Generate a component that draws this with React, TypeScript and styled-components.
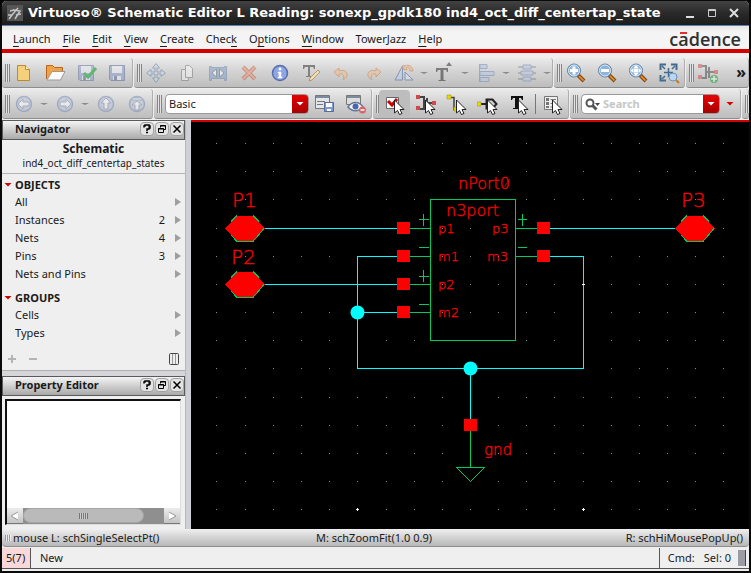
import React, { useState } from "react";
import styled, { createGlobalStyle, css } from "styled-components";

const Global = createGlobalStyle`
  * { box-sizing: border-box; }
  body { margin: 0; background: #000; }
  button, input, select { font: inherit; color: inherit; }
  svg { display: block; flex: none; }
`;

const Frame = styled.div`
  min-height: 100vh;
  display: flex;
  flex-direction: column;
  border: solid #0a0a0a;
  border-width: 1px 2px 2px;
  border-radius: 6px 6px 0 0;
  background: #efefef;
  color: #1a1a1a;
  font: 11px/18px "Noto Sans", sans-serif;
  overflow: hidden;
`;

const TitleBar = styled.header`
  display: flex;
  align-items: center;
  height: 25px;
  padding: 0 4px 0 5px;
  gap: 5px;
  background: linear-gradient(#424242, #2a2a2a 50%, #1c1c1c);
  border-bottom: 1px solid #5c82b0;
  color: #fff;
`;

const WindowTitle = styled.h1`
  flex: 1;
  min-width: 0;
  margin: 0;
  overflow: hidden;
  white-space: nowrap;
  font: bold 13px/20px "DejaVu Sans", sans-serif;
`;

const ControlRow = styled.div`
  display: flex;
`;

const WindowButton = styled.button`
  width: 22px;
  height: 22px;
  padding: 0;
  border: 0;
  background: none;
  display: grid;
  place-items: center;
`;

const MenuBar = styled.nav`
  display: flex;
  align-items: center;
  height: 27px;
  padding: 2px 8px 0 11px;
  gap: 12px;
  background: linear-gradient(#e6e6e6, #f4f4f4 6px);
  border-bottom: 4px solid #d20000;
`;

const MenuItem = styled.button`
  padding: 0;
  border: 0;
  background: none;
  line-height: 18px;
  u {
    text-underline-offset: 3px;
    text-decoration-thickness: 1px;
  }
`;

const Wordmark = styled.span`
  margin-left: auto;
  font: 600 18px/20px "Open Sans", sans-serif;
  color: #303030;
`;

const AccentedLetter = styled.span`
  position: relative;
  &::before {
    content: "";
    position: absolute;
    left: 2px;
    right: 2px;
    top: 5px;
    height: 2px;
    background: #e03030;
  }
`;

const ToolRow = styled.div<{ $first?: boolean }>`
  display: flex;
  gap: 1px;
  padding: ${(p) => (p.$first ? 5 : 0)}px 0 1px;
  background: #efefef;
`;

const ToolGroup = styled.div<{ $grow?: boolean }>`
  display: flex;
  align-items: center;
  height: 30px;
  flex: ${(p) => (p.$grow ? "1 1 0" : "none")};
  min-width: 0;
  background: linear-gradient(#ebebeb, #d6d6d6 40%, #bdbdbd);
  border-bottom: 1px solid #8d8d8d;
  border-right: 1px solid #adadad;
  border-radius: 3px;
`;

const Grip = styled.span`
  flex: none;
  width: 5px;
  height: 18px;
  margin: 0 -2px 0 3px;
  background: repeating-linear-gradient(90deg, #858585 0 1px, #e4e4e4 1px 2px);
`;

const ToolButton = styled.button<{ $active?: boolean }>`
  flex: none;
  width: 31px;
  height: 28px;
  padding: 0;
  border: 1px solid transparent;
  border-radius: 4px;
  background: ${(p) => (p.$active ? "#bdbdbd" : "none")};
  display: grid;
  place-items: center;
  &:disabled svg { opacity: 0.5; }
`;

const Caret = styled.button`
  flex: none;
  width: 10px;
  height: 20px;
  padding: 0;
  border: 0;
  background: none;
  display: grid;
  place-items: center;
  &::before {
    content: "";
    border: 4px solid transparent;
    border-bottom-width: 0;
    border-top: 2px solid #8a8a8a;
  }
`;

const Separator = styled.span`
  width: 1px;
  height: 20px;
  margin: 0 1px;
  background: #777;
`;

const More = styled.button`
  margin-left: auto;
  padding: 0 2px 2px;
  border: 0;
  background: none;
  font: bold 16px/20px "Noto Sans", sans-serif;
`;

const Field = styled.div<{ $grow?: boolean }>`
  display: flex;
  align-items: center;
  flex: ${(p) => (p.$grow ? "1 1 0" : "none")};
  width: ${(p) => (p.$grow ? "auto" : "144px")};
  min-width: 0;
  height: 20px;
  margin-left: 5px;
  border: 1px solid #999;
  border-radius: 4px;
  background: #fff linear-gradient(#e60000, #a80000) right / 16px 100% no-repeat;
  position: relative;
`;

const fieldText = css`
  width: 100%;
  min-width: 0;
  height: 18px;
  border: 0;
  padding: 0 18px 0 3px;
  background: none;
  outline: 0;
  appearance: none;
`;

const WorkspaceSelect = styled.select`
  ${fieldText}
`;

const SearchInput = styled.input`
  ${fieldText}
  font-weight: bold;
  &::placeholder { color: #c6c6c6; opacity: 1; }
`;

const Triangle = styled.span<{ $color: string }>`
  flex: none;
  width: 8px;
  height: 4px;
  background: ${(p) => p.$color};
  clip-path: polygon(0 0, 100% 0, 50% 100%);
`;

const FieldArrow = styled(Triangle)`
  position: absolute;
  right: 4px;
  pointer-events: none;
`;

const SearchMenu = styled.button`
  flex: none;
  width: 20px;
  height: 24px;
  padding: 0;
  border: 0;
  background: none;
  display: grid;
  place-items: center;
`;

const Body = styled.main`
  flex: 1;
  display: flex;
  min-height: 0;
`;

const Side = styled.aside`
  flex: none;
  width: 183px;
  display: flex;
  flex-direction: column;
`;

const Dock = styled.section<{ $fill?: boolean }>`
  display: flex;
  flex-direction: column;
  flex: ${(p) => (p.$fill ? 1 : "none")};
`;

const DockHeader = styled.header`
  display: flex;
  align-items: center;
  gap: 1px;
  height: 20px;
  padding: 0 0 2px 12px;
  background: linear-gradient(#f4f4f4, #cfcfcf 50%, #a9a9a9);
  border: 1px solid #5a5a5a;
`;

const DockTitle = styled.h2`
  flex: 1;
  margin: 0;
  font: bold 11px/16px "Noto Sans", sans-serif;
`;

const DockButton = styled.button`
  width: 14px;
  height: 14px;
  padding: 0;
  border: 1px solid #a2a2a2;
  border-radius: 4px;
  background: #e4e4e4;
  display: grid;
  place-items: center;
`;

const CellName = styled.div`
  height: 34px;
  padding-top: 2px;
  border-bottom: 1px solid #b4b4b4;
  text-align: center;
  font: 10px/14px "Noto Sans", sans-serif;
  strong {
    display: block;
    font-size: 12px;
  }
`;

const Tree = styled.div`
  padding: 2px 4px 6px 2px;
`;

const TreeHeading = styled.h3`
  display: flex;
  align-items: center;
  gap: 3px;
  margin: 0;
  font: bold 11px/17px "Noto Sans", sans-serif;
`;

const TreeList = styled.ul`
  list-style: none;
  margin: 0;
  padding: 0 0 6px 11px;
  &:last-child { padding-bottom: 0; }
`;

const TreeRow = styled.li`
  display: flex;
  align-items: center;
  height: 18px;
`;

const TreeLabel = styled.span`
  flex: 1;
`;

const Expand = styled.span`
  width: 6px;
  height: 8px;
  margin-left: 10px;
  background: #9e9e9e;
  clip-path: polygon(0 0, 100% 50%, 0 100%);
`;

const DockFooter = styled.footer`
  display: flex;
  align-items: center;
  gap: 5px;
  height: 22px;
  padding: 0 5px 0 2px;
`;

const FooterButton = styled.button<{ $right?: boolean }>`
  width: ${(p) => (p.$right ? 12 : 16)}px;
  height: 16px;
  margin-left: ${(p) => (p.$right ? "auto" : 0)};
  padding: 0;
  border: 0;
  background: none;
  display: grid;
  place-items: center;
`;

const HSplitter = styled.div`
  height: 6px;
  border-top: 1px solid #b0b0b0;
  background: #d4d4d9;
`;

const VSplitter = styled.div`
  flex: none;
  width: 6px;
  border-left: 1px solid #b8b8b8;
  background: #cfcfd6;
`;

const PropertyList = styled.div`
  flex: 1;
  display: flex;
  flex-direction: column;
  justify-content: flex-end;
  margin: 3px 4px 4px 3px;
  background: #fff;
  border: solid #111;
  border-width: 2px 0 0 2px;
  border-right: 1px solid #ddd;
  border-bottom: 1px solid #ddd;
`;

const ScrollBar = styled.div`
  display: flex;
  height: 16px;
  background: #8f8f8f;
`;

const ScrollStep = styled.button`
  flex: none;
  width: 16px;
  height: 16px;
  padding: 0;
  border: 0;
  border-bottom: 1px solid #777;
  background: linear-gradient(#ececec, #c4c4c4);
  display: grid;
  place-items: center;
`;

const ScrollTrack = styled.div`
  flex: 1;
`;

const ScrollThumb = styled.div`
  width: 86%;
  height: 15px;
  border: 1px solid #a5a5a5;
  border-radius: 8px;
  background: #bababa;
  display: grid;
  place-items: center;
  &::before {
    content: "";
    width: 9px;
    height: 6px;
    background: repeating-linear-gradient(90deg, #777 0 1px, #ccc 1px 2px);
  }
`;

const Canvas = styled.div`
  flex: 1;
  min-width: 0;
  background: #000;
  border-top: 2px solid #d20000;
  overflow: hidden;
  svg { width: 100%; }
  text {
    fill: #f00;
    stroke: #f00;
    stroke-width: 0.3;
    font-family: "DejaVu Sans Light", "DejaVu Sans", sans-serif;
    font-weight: 200;
  }
`;

const HintBar = styled.div`
  display: grid;
  grid-template-columns: 1fr auto 1fr;
  height: 18px;
  padding: 0 6px 0 3px;
  line-height: 16px;
  background: linear-gradient(#f0f0f0, #d8d8d8 40%, #b8b8b8);
  border-bottom: 1px solid #8d8d8d;
  border-radius: 0 0 4px 4px;
`;

const Hint = styled.span<{ $end?: boolean }>`
  display: flex;
  align-items: center;
  justify-content: ${(p) => (p.$end ? "flex-end" : "flex-start")};
`;

const HintGrip = styled.span`
  width: 6px;
  height: 6px;
  margin-right: 2px;
  background: repeating-linear-gradient(90deg, #999 0 1px, #eee 1px 2px);
`;

const StatusBar = styled.footer`
  display: flex;
  align-items: stretch;
  height: 21px;
  margin: 1px 0 2px;
  border-bottom: 1px solid #555;
  line-height: 20px;
`;

const Counter = styled.span`
  width: 29px;
  padding-left: 4px;
  background: #f8d8d8;
  border-right: 1px solid #555;
  margin-right: 9px;
`;

const CommandState = styled.span`
  display: flex;
  gap: 9px;
  margin-left: auto;
  padding: 0 5px 0 8px;
  border-left: 1px solid #555;
`;

const Resizer = styled.span`
  width: 8px;
  margin: 2px 3px 2px 2px;
  background: #9b9ba3;
  border-right: 1px solid #444;
`;

/* ---------- icons ---------- */

const Svg = ({ children, size = 22 }: { children: React.ReactNode; size?: number }) => (
  <svg width={size} height={size} viewBox={`0 0 ${size} ${size}`} fill="none" aria-hidden="true">
    {children}
  </svg>
);

const Cursor = () => (
  <path d="M10.500 7v13l3-2.500 2 4 2.500-1-2-4h4z" fill="#fff" stroke="#222" strokeWidth="1" />
);

const Lens = ({ children }: { children?: React.ReactNode }) => (
  <>
    <path d="m13 13 6 6" stroke="#8c4a10" strokeWidth="4" />
    <path d="m14 14 4.500 4.500" stroke="#e69a3c" strokeWidth="1.500" />
    <circle cx="9" cy="8.500" r="6.500" fill="#8fb4dc" stroke="#5d7f9f" strokeWidth="1" />
    <circle cx="9" cy="8.500" r="5.500" stroke="#d8e8f8" strokeWidth="1" />
    {children}
  </>
);

const Disc = ({ children }: { children: React.ReactNode }) => (
  <>
    <circle cx="11" cy="11" r="7.500" fill="#b9c6e0" stroke="#7587b0" strokeWidth="1.500" />
    {children}
  </>
);

const Floppy = () => (
  <>
    <path d="M3.500 3.500h15v15H5l-1.500-1.500z" fill="#8497c9" stroke="#51628f" />
    <path d="M6 4h10v7H6zM7 14h8v4H7z" fill="#eef2fb" />
    <path d="M8 14h3v4H8z" fill="#51628f" />
  </>
);

const Pieces = () => (
  <>
    <path d="M3 4h6v12H3M12 5v11M9 10h3M12 10h8" stroke="#444" strokeWidth="2" />
    <path d="M1 2h4v4H1zM1 13h4v4H1zM17 8h4v4h-4z" fill="#d04848" />
  </>
);

const icons: Record<string, React.ReactNode> = {
  new: (
    <>
      <path d="M4.500 3.500h8l4 4v11h-12z" fill="#f4cf7c" stroke="#c08a2c" />
      <path d="M12.500 3.500v4h4" fill="#fff3cf" stroke="#c08a2c" />
    </>
  ),
  open: (
    <>
      <path d="M2.500 17V3.500h6l2 2h8v4" fill="#f0a244" stroke="#b8651a" />
      <path d="M3 18 8 9.500h13L16.500 18z" fill="#fbfbfb" stroke="#999" />
    </>
  ),
  check: (
    <>
      <g opacity=".45"><Floppy /></g>
      <path d="m9 11 4 4 8-9" stroke="#62b672" strokeWidth="3" />
    </>
  ),
  save: <Floppy />,
  move: <path d="M11 1.500 7.500 6H10v4H6V7.500L1.500 11 6 14.500V12h4v4H7.500l3.500 4.500 3.500-4.500H12v-4h4v2.500l4.500-3.500L16 7.500V10h-4V6h2.500z" fill="#c8d6ea" stroke="#5f7da5" />,
  copy: (
    <>
      <path d="M5.500 7.500h7v11h-7z" fill="#f4f4f4" stroke="#777" />
      <path d="M9.500 3.500h4l3 3v9h-7z" fill="#f8f8f8" stroke="#777" />
    </>
  ),
  stretch: (
    <>
      <path d="M2.500 4.500h2v1h13v-1h2v14h-2v-2h-13v2h-2z" fill="#7f9cc6" stroke="#6480ab" />
      <path d="M9.500 7v8L5 11zM12.500 7v8l4.500-4z" fill="#fff" stroke="#567" />
    </>
  ),
  delete: (
    <>
      <path d="m5 5 12 12M17 5 5 17" stroke="#c1502c" strokeWidth="4" />
      <path d="m5 5 12 12M17 5 5 17" stroke="#eb9272" strokeWidth="2" />
    </>
  ),
  info: (
    <>
      <circle cx="11" cy="11" r="7.500" fill="#8da6e4" stroke="#5a6cab" strokeWidth="1.500" />
      <path d="M10 6h2v2h-2zM9 10h3v5h1v1H9v-1h1v-4H9z" fill="#fff" stroke="#fff" strokeWidth=".5" />
    </>
  ),
  edit: (
    <>
      <path d="M3 3h12v4h-1l-1-2h-3v9h2v1H6v-1h2V5H5L4 7H3z" fill="#808080" />
      <path d="m9 19 1-3 8-8 2 2-8 8z" fill="#f3ddb4" stroke="#b39768" />
    </>
  ),
  undo: <path d="M8 6v3c5-2 9 1 8 5-1 2-3 3-4 4 2-4 0-7-4-6v3L3 10z" fill="#f3bd8c" stroke="#cc7d3d" />,
  redo: <path d="M14 6v3c-5-2-9 1-8 5 1 2 3 3 4 4-2-4 0-7 4-6v3l5-5z" fill="#f3bd8c" stroke="#cc7d3d" />,
  rotate: (
    <>
      <path d="M9.500 4v14H2z" fill="#bdd0ea" stroke="#3f5f9b" />
      <path d="M12 10v8h8z" fill="#dbe6f4" stroke="#3f5f9b" />
      <path d="M10 7V3l2 1c4-2 7 0 8 5h-3c0-3-2-4-4-3l1 2z" fill="#f0b078" stroke="#cc7d3d" />
    </>
  ),
  label: (
    <>
      <path d="M2 6h12v4h-1l-1-2H9.500v10h2v1h-7v-1h2V8H4l-1 2H2z" fill="#222" />
      <path d="m12 4 3-4 3 4z" fill="#222" />
    </>
  ),
  align: (
    <>
      <path d="M4.500 2v18" stroke="#d06060" />
      <path d="M5 2.500h7v4H5zM5 9.500h14v4H5zM5 15.500h9v4H5z" fill="#b7c7e2" stroke="#6d83b5" />
    </>
  ),
  distribute: (
    <>
      <path d="M2 5h18M2 11h18M2 17h18" stroke="#555" />
      <path d="M7 3h8v4H7zM5 9h12v4H5zM7 15h8v4H7z" fill="#b7c7e2" stroke="#6d83b5" />
    </>
  ),
  zoomIn: <Lens><path d="M9 4.500v8M5 8.500h8" stroke="#fff" strokeWidth="3" /></Lens>,
  zoomOut: <Lens><path d="M5 8.500h8" stroke="#fff" strokeWidth="3" /></Lens>,
  zoomPan: <Lens><path d="m9 3 2.500 3h-5zM9 14l2.500-3h-5zM3.500 8.500l3-2.500v5zM14.500 8.500l-3-2.500v5zM7 6.500h4v4H7z" fill="#fff" /></Lens>,
  zoomFit: (
    <>
      <path d="M2.500 8V2.500H8M13 2.500h5.500V8M2.500 13v5.500H8" stroke="#426b91" strokeWidth="2" />
      <path d="M10.500 6v9M6 10.500h9M4 4l3 3M17 4l-3 3M4 17l3-3" stroke="#426b91" strokeWidth="1.500" />
      <circle cx="15" cy="15" r="4" fill="#b8d7f4" stroke="#6d93b8" />
      <path d="m18 18 3 3" stroke="#c77b2b" strokeWidth="2" />
    </>
  ),
  addPiece: (
    <>
      <Pieces />
      <circle cx="17" cy="17" r="4" fill="#159a2c" />
      <path d="M17 14v6M14 17h6" stroke="#fff" strokeWidth="1.500" />
    </>
  ),
  back: <Disc><path d="m5 11 5-5v3h6v4h-6v3z" fill="#fff" stroke="#7789ad" /></Disc>,
  forward: <Disc><path d="m17 11-5-5v3H6v4h6v3z" fill="#fff" stroke="#7789ad" /></Disc>,
  up: <Disc><path d="m11 5-5 5h3v6h4v-6h3z" fill="#fff" stroke="#7789ad" /></Disc>,
  top: <Disc><path d="M6 5h10v2H6zM11 8l-5 4h3v5h4v-5h3z" fill="#fff" stroke="#7789ad" /></Disc>,
  saveView: (
    <>
      <path d="M1.500 2.500h14v13h-14z" fill="#e4e6e8" stroke="#777" />
      <path d="M2 3h13v2H2z" fill="#7d8c9d" />
      <path d="M3 8.500h8M3 11.500h6" stroke="#777" />
      <path d="M10.500 9.500h9v9h-9z" fill="#7f9bd0" stroke="#56699a" />
      <path d="M12 10h6v4h-6zM13 16h4v2h-4z" fill="#fff" />
    </>
  ),
  hideView: (
    <>
      <path d="M1.500 2.500h14v9h-14z" fill="#dcdcdc" stroke="#777" />
      <path d="M2 3h13v2H2z" fill="#7d8c9d" />
      <path d="M3 14c4-6 11-6 15 0-4 5-11 5-15 0z" fill="#f4f6fb" stroke="#66759a" strokeWidth="1.500" />
      <circle cx="10.500" cy="13.500" r="3" fill="#4767a8" />
      <circle cx="17.500" cy="17" r="3.500" fill="#dc6464" />
      <path d="M15.500 17h4" stroke="#fff" strokeWidth="1.500" />
    </>
  ),
  selectAll: (
    <>
      <path d="M2.500 4.500h12v11h-12z" fill="#fff" stroke="#666" />
      <path d="m4 8 4 4 5-6" stroke="#d00000" strokeWidth="3" />
      <Cursor />
    </>
  ),
  selectInst: (<><Pieces /><Cursor /></>),
  selectWire: (
    <>
      <path d="M3 4.500h5v12h6" stroke="#444" strokeWidth="1.500" />
      <path d="M1 2h4v4H1zM8 14h4v4H8z" fill="#e6d800" stroke="#988f00" strokeWidth=".5" />
      <Cursor />
    </>
  ),
  selectPin: (
    <>
      <path d="M2 11h8M9.500 6.500h6l4 4.500-4 4.500h-6z" stroke="#222" strokeWidth="2" />
      <path d="M0 9h4v4H0z" fill="#e6d800" stroke="#988f00" strokeWidth=".5" />
      <Cursor />
    </>
  ),
  selectText: (
    <>
      <path d="M3 3h12v4h-1l-1-2h-2v10h2v1H5v-1h2V5H5L4 7H3z" fill="#111" />
      <Cursor />
    </>
  ),
  selectForm: (
    <>
      <path d="M2.500 3.500h13v13h-13z" fill="#eee" stroke="#777" />
      <path d="M4 5h3v3H4zM4 9h3v3H4zM4 13h3v2H4z" fill="#777" />
      <path d="M8.500 6.500H14M8.500 10.500H14M8.500 14H12" stroke="#777" />
      <Cursor />
    </>
  ),
};

type Tool = { icon: string; label: string; off?: boolean; menu?: boolean };

const Tools = ({ items, active, onPick }: { items: Tool[]; active?: string; onPick?: (icon: string) => void }) => (
  <>
    {items.map((t) => (
      <React.Fragment key={t.icon}>
        <ToolButton
          disabled={t.off}
          $active={active === t.icon}
          aria-label={t.label}
          onClick={() => onPick?.(t.icon)}
        >
          <Svg>{icons[t.icon]}</Svg>
        </ToolButton>
        {t.menu && <Caret aria-label={`${t.label} options`} />}
      </React.Fragment>
    ))}
  </>
);

const fileTools: Tool[] = [
  { icon: "new", label: "New" },
  { icon: "open", label: "Open" },
  { icon: "check", label: "Check and Save" },
  { icon: "save", label: "Save", off: true },
];
const editTools: Tool[] = [
  { icon: "move", label: "Move", off: true },
  { icon: "copy", label: "Copy", off: true },
  { icon: "stretch", label: "Stretch", off: true },
  { icon: "delete", label: "Delete", off: true },
  { icon: "info", label: "Properties" },
  { icon: "edit", label: "Edit Label" },
  { icon: "undo", label: "Undo", off: true },
  { icon: "redo", label: "Redo", off: true },
  { icon: "rotate", label: "Rotate", off: true, menu: true },
  { icon: "label", label: "Label", off: true, menu: true },
  { icon: "align", label: "Align", off: true, menu: true },
  { icon: "distribute", label: "Distribute", off: true, menu: true },
];
const zoomTools: Tool[] = [
  { icon: "zoomIn", label: "Zoom In" },
  { icon: "zoomOut", label: "Zoom Out" },
  { icon: "zoomPan", label: "Zoom to Fit" },
  { icon: "zoomFit", label: "Zoom to Selected" },
];
const goTools: Tool[] = [
  { icon: "back", label: "Back", off: true, menu: true },
  { icon: "forward", label: "Forward", off: true, menu: true },
  { icon: "up", label: "Up", off: true },
  { icon: "top", label: "Top", off: true },
];
const viewTools: Tool[] = [
  { icon: "saveView", label: "Save Workspace" },
  { icon: "hideView", label: "Hide Assistants" },
];
const selectTools: Tool[] = [
  { icon: "selectAll", label: "Select All" },
  { icon: "selectInst", label: "Select Instances" },
  { icon: "selectWire", label: "Select Wires" },
  { icon: "selectPin", label: "Select Pins" },
  { icon: "selectText", label: "Select Labels" },
];

const menus: [string, string, string][] = [
  ["", "L", "aunch"],
  ["", "F", "ile"],
  ["", "E", "dit"],
  ["", "V", "iew"],
  ["", "C", "reate"],
  ["Chec", "k", ""],
  ["O", "p", "tions"],
  ["", "W", "indow"],
  ["TowerJazz", "", ""],
  ["", "H", "elp"],
];

const WindowControls = () => (
  <ControlRow>
    <WindowButton aria-label="Minimize">
      <Svg size={12}><path d="M2 10h8" stroke="#ddd" strokeWidth="2" /></Svg>
    </WindowButton>
    <WindowButton aria-label="Maximize">
      <Svg size={12}><path d="M2.500 2.500h7v7h-7zM2 3.500h8" stroke="#ccc" /></Svg>
    </WindowButton>
    <WindowButton aria-label="Close">
      <Svg size={12}><path d="m2 2 8 8M10 2l-8 8" stroke="#ddd" strokeWidth="2" /></Svg>
    </WindowButton>
  </ControlRow>
);

const DockTop = ({ title }: { title: string }) => (
  <DockHeader>
    <DockTitle>{title}</DockTitle>
    <DockButton aria-label={`${title} help`}>
      <Svg size={10}>
        <path d="M2 3.500V2h1V1h4v1h1v2H7v1H5v2M4 8.500h2" stroke="#000" strokeWidth="1.500" />
      </Svg>
    </DockButton>
    <DockButton aria-label={`Float ${title}`}>
      <Svg size={10}>
        <path d="M3.500 3.500v-2h5v4h-2M1.500 4.500h5v4h-5zM3 2h6M1 5h6" stroke="#000" />
      </Svg>
    </DockButton>
    <DockButton aria-label={`Close ${title}`}>
      <Svg size={10}>
        <path d="m1.500 1.500 7 7M8.500 1.500l-7 7" stroke="#000" strokeWidth="1.500" />
      </Svg>
    </DockButton>
  </DockHeader>
);

const TreeSection = ({ title, rows }: { title: string; rows: [string, number?][] }) => (
  <>
    <TreeHeading>
      <Triangle $color="#d20000" />
      {title}
    </TreeHeading>
    <TreeList>
      {rows.map(([label, count]) => (
        <TreeRow key={label}>
          <TreeLabel>{label}</TreeLabel>
          {count}
          <Expand />
        </TreeRow>
      ))}
    </TreeList>
  </>
);

/* ---------- schematic ---------- */

const gridX = [216, 245, 273, 301, 329, 357, 386, 414, 442, 470, 498, 526, 554, 583, 611, 639, 667, 695, 723];
const gridY = [143, 171, 199, 228, 256, 284, 312, 340, 368, 397, 425, 453, 481, 509];
const pads: [number, number][] = [
  [403, 228], [403, 256], [403, 284], [403, 312], [543, 228], [543, 256], [470, 425],
];
const ports: [string, number, number, number, number][] = [
  ["P1", 245, 228, 232, 207],
  ["P2", 245, 284, 231, 264],
  ["P3", 695, 228, 681, 207],
];
const labels: [string, number, number, number][] = [
  ["nPort0", 458, 189, 16],
  ["n3port", 446, 216, 16],
  ["p1", 438, 233, 13],
  ["m1", 438, 261, 13],
  ["p2", 438, 289, 13],
  ["m2", 438, 317, 13],
  ["p3", 492, 233, 13],
  ["m3", 487, 261, 13],
  ["gnd", 484, 455, 15],
];

const Schematic = () => (
  <svg viewBox="191 122 558 407" role="img" aria-label="Schematic ind4_oct_diff_centertap_states">
    <g shapeRendering="crispEdges">
      {gridY.map((y) => gridX.map((x) => <rect key={`${x}-${y}`} x={x} y={y} width="1" height="1" fill="#85858f" />))}
      <path
        d="M264 228.500H397M357.500 368V256.500H397M264 284.500H397M357 312.500H397M357 368.500H583.500V256.500H549M549 228.500H676M470.500 368V419"
        stroke="#00ffff"
        fill="none"
      />
      <path
        d="M409 228.500H430M409 256.500H430M409 284.500H430M409 312.500H430M515 228.500H537M515 256.500H537M430.500 199.500H515.500V340.500H430.500ZM470.500 431V467M419 219.500H429M423.500 214V226M419 247.500H429M419 276.500H429M423.500 270V282M419 304.500H429M518 219.500H527M522.500 214V226M518 247.500H527M456.500 467.500H484.500L470.500 481.500Z"
        stroke="#00c864"
        fill="none"
      />
      {ports.map(([name, x, y]) => (
        <path
          key={name}
          transform={`translate(${x} ${y})`}
          d="M-20 .5-8-12.500H8L20 .5 8 13.500H-8Z"
          fill="#f00"
        />
      ))}
      {ports.map(([name, x, y]) => (
        <path
          key={name}
          transform={`translate(${x} ${y})`}
          d="M-14-6.500-8-12.500M8-12.500 14-6.500M19 .5 8 13.500H-8L-14 7"
          fill="none"
          stroke="#00c864"
        />
      ))}
      {pads.map(([x, y]) => (
        <rect key={`${x}-${y}`} x={x - 6} y={y - 6} width="13" height="12" fill="#f00" />
      ))}
      <path d="M356 509.500h3M357.500 508v3M582 509.500h3M583.500 508v3M582 284.500h3" stroke="#fff" />
    </g>
    <circle cx="357.500" cy="312.500" r="7" fill="#0ff" />
    <circle cx="470.500" cy="368.500" r="7" fill="#0ff" />
    {ports.map(([name, , , x, y]) => (
      <text key={name} x={x} y={y} fontSize="20">{name}</text>
    ))}
    {labels.map(([name, x, y, size]) => (
      <text key={name} x={x} y={y} fontSize={size}>{name}</text>
    ))}
    <path d="m504.500 187 5-8" stroke="#f00" strokeWidth=".8" />
  </svg>
);

export default function App() {
  const [mode, setMode] = useState("selectAll");
  return (
    <>
      <Global />
      <Frame>
        <TitleBar>
          <Svg size={16}>
            <path d="M0 0h16v16H0z" fill="#555" />
            <path d="M1 10h4l6-7M5 10l-3 4M6 5l7 1-5 8M9 10l5-1M3 6l4-1" stroke="#c4c4c4" strokeWidth="1.500" />
          </Svg>
          <WindowTitle>Virtuoso® Schematic Editor L Reading: sonexp_gpdk180 ind4_oct_diff_centertap_state</WindowTitle>
          <WindowControls />
        </TitleBar>
        <MenuBar>
          {menus.map(([a, b, c]) => (
            <MenuItem key={a + b + c}>{a}{b && <u>{b}</u>}{c}</MenuItem>
          ))}
          <Wordmark>c<AccentedLetter>a</AccentedLetter>dence</Wordmark>
        </MenuBar>
        <ToolRow $first>
          <ToolGroup><Grip /><Tools items={fileTools} /></ToolGroup>
          <ToolGroup><Grip /><Tools items={editTools} /></ToolGroup>
          <ToolGroup><Grip /><Tools items={zoomTools} /></ToolGroup>
          <ToolGroup $grow>
            <Grip />
            <Tools items={[{ icon: "addPiece", label: "Add Instance", off: true }]} />
            <More aria-label="More tools">»</More>
          </ToolGroup>
        </ToolRow>
        <ToolRow>
          <ToolGroup><Grip /><Tools items={goTools} /></ToolGroup>
          <ToolGroup>
            <Grip />
            <Field>
              <WorkspaceSelect aria-label="Workspace" defaultValue="Basic">
                <option>Basic</option>
              </WorkspaceSelect>
              <FieldArrow $color="#fff" />
            </Field>
            <Tools items={viewTools} />
          </ToolGroup>
          <ToolGroup>
            <Grip />
            <Tools items={selectTools} active={mode} onPick={setMode} />
            <Separator />
            <Tools items={[{ icon: "selectForm", label: "Selection Options" }]} />
          </ToolGroup>
          <ToolGroup $grow>
            <Grip />
            <Field $grow>
              <Svg size={18}>
                <circle cx="8" cy="8" r="3.500" stroke="#555" strokeWidth="2" />
                <path d="m10.500 10.500 4 4" stroke="#555" strokeWidth="3" />
                <path d="M13 8h5l-2.500 3z" fill="#444" />
              </Svg>
              <SearchInput aria-label="Search" placeholder="Search" />
              <FieldArrow $color="#fff" />
            </Field>
            <SearchMenu aria-label="Search options"><Triangle $color="#d20000" /></SearchMenu>
          </ToolGroup>
          <ToolGroup><Grip /></ToolGroup>
        </ToolRow>
        <Body>
          <Side>
            <Dock>
              <DockTop title="Navigator" />
              <CellName>
                <strong>Schematic</strong>
                ind4_oct_diff_centertap_states
              </CellName>
              <Tree>
                <TreeSection
                  title="OBJECTS"
                  rows={[["All"], ["Instances", 2], ["Nets", 4], ["Pins", 3], ["Nets and Pins"]]}
                />
                <TreeSection title="GROUPS" rows={[["Cells"], ["Types"]]} />
              </Tree>
              <DockFooter>
                <FooterButton aria-label="Add group">
                  <Svg size={10}><path d="M1 5h8M5 1v8" stroke="#b4b4b4" strokeWidth="2" /></Svg>
                </FooterButton>
                <FooterButton aria-label="Remove group">
                  <Svg size={10}><path d="M1 5h8" stroke="#b4b4b4" strokeWidth="2" /></Svg>
                </FooterButton>
                <FooterButton $right aria-label="Columns">
                  <Svg size={12}>
                    <path d="M4.500 1v10M7.500 1v10" stroke="#999" />
                    <rect x="1.500" y=".5" width="9" height="11" rx="1" stroke="#444" />
                  </Svg>
                </FooterButton>
              </DockFooter>
            </Dock>
            <HSplitter />
            <Dock $fill>
              <DockTop title="Property Editor" />
              <PropertyList>
                <ScrollBar>
                  <ScrollStep aria-label="Scroll left">
                    <Svg size={10}><path d="M8 1 1 5l7 4" fill="#fff" stroke="#999" /></Svg>
                  </ScrollStep>
                  <ScrollTrack><ScrollThumb /></ScrollTrack>
                  <ScrollStep aria-label="Scroll right">
                    <Svg size={10}><path d="m2 1 7 4-7 4" fill="#fff" stroke="#999" /></Svg>
                  </ScrollStep>
                </ScrollBar>
              </PropertyList>
            </Dock>
          </Side>
          <VSplitter />
          <Canvas><Schematic /></Canvas>
        </Body>
        <HintBar>
          <Hint><HintGrip />mouse L: schSingleSelectPt()</Hint>
          <Hint>M: schZoomFit(1.0 0.9)</Hint>
          <Hint $end>R: schHiMousePopUp()</Hint>
        </HintBar>
        <StatusBar>
          <Counter>5(7)</Counter>
          New
          <CommandState><span>Cmd:</span><span>Sel: 0</span></CommandState>
          <Resizer />
        </StatusBar>
      </Frame>
    </>
  );
}
